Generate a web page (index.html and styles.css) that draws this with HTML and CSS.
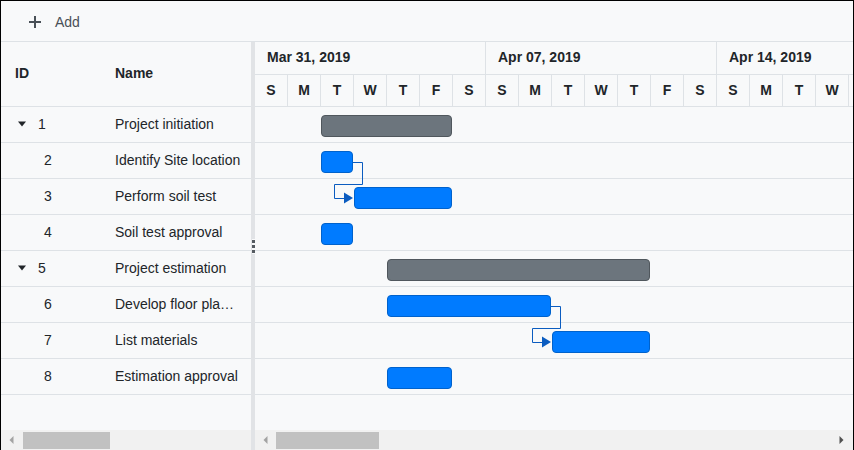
FILE: index.html
```html
<!DOCTYPE html>
<html>
<head>
<meta charset="utf-8">
<link rel="stylesheet" href="styles.css">
</head>
<body>
<div class="gantt">
  <div class="toolbar">
    <span class="add-btn">
      <svg class="plus" width="12" height="12" viewBox="0 0 12 12"><path d="M6 0V12M0 6H12" stroke="#495057" stroke-width="2"/></svg>
      <span>Add</span>
    </span>
  </div>
  <div class="main">
    <div class="grid-pane">
      <div class="grid-header">
        <div class="col-id">ID</div>
        <div class="col-name">Name</div>
      </div>
      <div class="grid-body">
        <div class="grow"><div class="col-id parent"><svg class="caret" width="10" height="6" viewBox="0 0 10 6"><path d="M1 0.5H9L5 5.5Z" fill="#212529"/></svg><span>1</span></div><div class="col-name">Project initiation</div></div>
        <div class="grow"><div class="col-id child">2</div><div class="col-name">Identify Site location</div></div>
        <div class="grow"><div class="col-id child">3</div><div class="col-name">Perform soil test</div></div>
        <div class="grow"><div class="col-id child">4</div><div class="col-name">Soil test approval</div></div>
        <div class="grow"><div class="col-id parent"><svg class="caret" width="10" height="6" viewBox="0 0 10 6"><path d="M1 0.5H9L5 5.5Z" fill="#212529"/></svg><span>5</span></div><div class="col-name">Project estimation</div></div>
        <div class="grow"><div class="col-id child">6</div><div class="col-name">Develop floor plan for estimation</div></div>
        <div class="grow"><div class="col-id child">7</div><div class="col-name">List materials</div></div>
        <div class="grow"><div class="col-id child">8</div><div class="col-name">Estimation approval</div></div>
      </div>
      <div class="hscroll">
        <span class="sbtn"><svg width="5" height="8" viewBox="0 0 5 8"><path d="M4.5 0V8L0.5 4Z" fill="#a3a3a3"/></svg></span>
        <span class="thumb thumb-left"></span>
      </div>
    </div>
    <div class="splitter"><span class="grip"><i></i><i></i><i></i></span></div>
    <div class="chart-pane">
      <div class="scale">
        <div class="weeks">
          <div class="week">Mar 31, 2019</div>
          <div class="week">Apr 07, 2019</div>
          <div class="week">Apr 14, 2019</div>
        </div>
        <div class="days">
          <div class="day">S</div><div class="day">M</div><div class="day">T</div><div class="day">W</div><div class="day">T</div><div class="day">F</div><div class="day">S</div>
          <div class="day">S</div><div class="day">M</div><div class="day">T</div><div class="day">W</div><div class="day">T</div><div class="day">F</div><div class="day">S</div>
          <div class="day">S</div><div class="day">M</div><div class="day">T</div><div class="day">W</div><div class="day">T</div><div class="day">F</div><div class="day">S</div>
        </div>
      </div>
      <div class="chart-body">
        <div class="crow"><div class="bar summary" style="margin-left:66px;width:131px"></div></div>
        <div class="crow"><div class="bar task" style="margin-left:66px;width:32px"></div></div>
        <div class="crow"><div class="bar task" style="margin-left:99px;width:98px"></div></div>
        <div class="crow"><div class="bar task" style="margin-left:66px;width:32px"></div></div>
        <div class="crow"><div class="bar summary" style="margin-left:132px;width:263px"></div></div>
        <div class="crow"><div class="bar task" style="margin-left:132px;width:164px"></div></div>
        <div class="crow"><div class="bar task" style="margin-left:297px;width:98px"></div></div>
        <div class="crow"><div class="bar task" style="margin-left:132px;width:65px"></div></div>
        <svg class="links" width="598" height="300" viewBox="0 0 598 300">
          <path d="M98 55.5H107.5V77.5H79.5V91.5H90" fill="none" stroke="#0b5cc0" stroke-width="1"/>
          <path d="M89 85.5L98 91L89 96.5Z" fill="#0b5cc0"/>
          <path d="M296 199.5H305.5V221.5H277.5V235.5H288" fill="none" stroke="#0b5cc0" stroke-width="1"/>
          <path d="M287 229.5L296 235L287 240.5Z" fill="#0b5cc0"/>
        </svg>
      </div>
      <div class="hscroll">
        <span class="sbtn"><svg width="5" height="8" viewBox="0 0 5 8"><path d="M4.5 0V8L0.5 4Z" fill="#a3a3a3"/></svg></span>
        <span class="thumb thumb-right"></span>
        <span class="sbtn sbtn-end"><svg width="5" height="8" viewBox="0 0 5 8"><path d="M0.5 0V8L4.5 4Z" fill="#505050"/></svg></span>
      </div>
    </div>
  </div>
</div>
</body>
</html>
```

FILE: styles.css
```css
* { box-sizing: border-box; }
html, body { margin: 0; padding: 0; }
body {
  font-family: "Liberation Sans", Arial, sans-serif;
  font-size: 14px;
  color: #212529;
  background: #ffffff;
}
.gantt {
  width: 854px;
  height: 450px;
  border: 1px solid #000;
  border-bottom: none;
  background: #f8f9fa;
  display: flex;
  flex-direction: column;
  overflow: hidden;
}
.toolbar {
  height: 41px;
  flex-shrink: 0;
  border-bottom: 1px solid #dee2e6;
  display: flex;
  align-items: center;
  padding-left: 28px;
  padding-top: 2px;
}
.add-btn {
  display: flex;
  align-items: center;
  gap: 14px;
  color: #495057;
  font-size: 14px;
}
.plus { display: block; margin-top: -1px; }
.main {
  flex: 1;
  display: flex;
  min-height: 0;
}
.grid-pane {
  width: 250px;
  flex-shrink: 0;
  display: flex;
  flex-direction: column;
}
.grid-header {
  height: 65px;
  flex-shrink: 0;
  border-bottom: 1px solid #dee2e6;
  display: flex;
  align-items: center;
  padding-bottom: 2px;
  font-weight: bold;
}
.col-id {
  width: 100px;
  padding-left: 14px;
  flex-shrink: 0;
}
.col-name {
  width: 150px;
  padding-left: 14px;
  padding-right: 10px;
  white-space: nowrap;
  overflow: hidden;
  text-overflow: ellipsis;
}
.grid-body {
  flex: 1;
  overflow: hidden;
}
.grow {
  height: 36px;
  border-bottom: 1px solid #dee2e6;
  display: flex;
  align-items: center;
  padding-bottom: 2px;
}
.col-id.parent {
  display: flex;
  align-items: center;
  padding-left: 16px;
}
.caret {
  display: block;
  margin-right: 11px;
}
.col-id.child {
  padding-left: 43px;
}
.hscroll {
  height: 20px;
  flex-shrink: 0;
  background: #f1f1f1;
  display: flex;
  align-items: center;
}
.sbtn {
  width: 20px;
  height: 20px;
  flex-shrink: 0;
  display: flex;
  align-items: center;
  justify-content: center;
}
.sbtn svg { display: block; }
.thumb {
  height: 17px;
  background: #c1c1c1;
  flex-shrink: 0;
}
.thumb-left { width: 87px; margin-left: 2px; }
.thumb-right { width: 103px; margin-left: 1px; }
.sbtn-end { margin-left: auto; width: 24px; }
.splitter {
  width: 4px;
  flex-shrink: 0;
  background: #e1e3e6;
  display: flex;
  align-items: center;
  justify-content: center;
}
.grip {
  display: flex;
  flex-direction: column;
  gap: 2px;
  background: #f8f9fa;
  padding: 1px 0;
}
.grip i {
  display: block;
  width: 3px;
  height: 3px;
  background: #555b61;
}
.chart-pane {
  flex: 1;
  min-width: 0;
  display: flex;
  flex-direction: column;
  overflow: hidden;
}
.scale {
  flex-shrink: 0;
  font-weight: bold;
}
.weeks, .days {
  display: flex;
  width: 693px;
}
.weeks {
  height: 33px;
  border-bottom: 1px solid #dee2e6;
}
.week {
  width: 231px;
  flex-shrink: 0;
  border-right: 1px solid #dee2e6;
  padding-left: 12px;
  padding-bottom: 2px;
  display: flex;
  align-items: center;
}
.days {
  height: 32px;
  border-bottom: 1px solid #dee2e6;
}
.day {
  width: 33px;
  flex-shrink: 0;
  border-right: 1px solid #dee2e6;
  display: flex;
  align-items: center;
  justify-content: center;
  padding-bottom: 2px;
}
.chart-body {
  flex: 1;
  position: relative;
  overflow: hidden;
}
.crow {
  height: 36px;
  border-bottom: 1px solid #dee2e6;
  display: flex;
  align-items: flex-start;
}
.bar {
  height: 22px;
  margin-top: 8px;
  border-radius: 4px;
  border: 1px solid;
  flex-shrink: 0;
}
.bar.task {
  background: #007bff;
  border-color: #0062cc;
}
.bar.summary {
  background: #6c757d;
  border-color: #50575d;
}
.links {
  position: absolute;
  left: 0;
  top: 0;
}
```
